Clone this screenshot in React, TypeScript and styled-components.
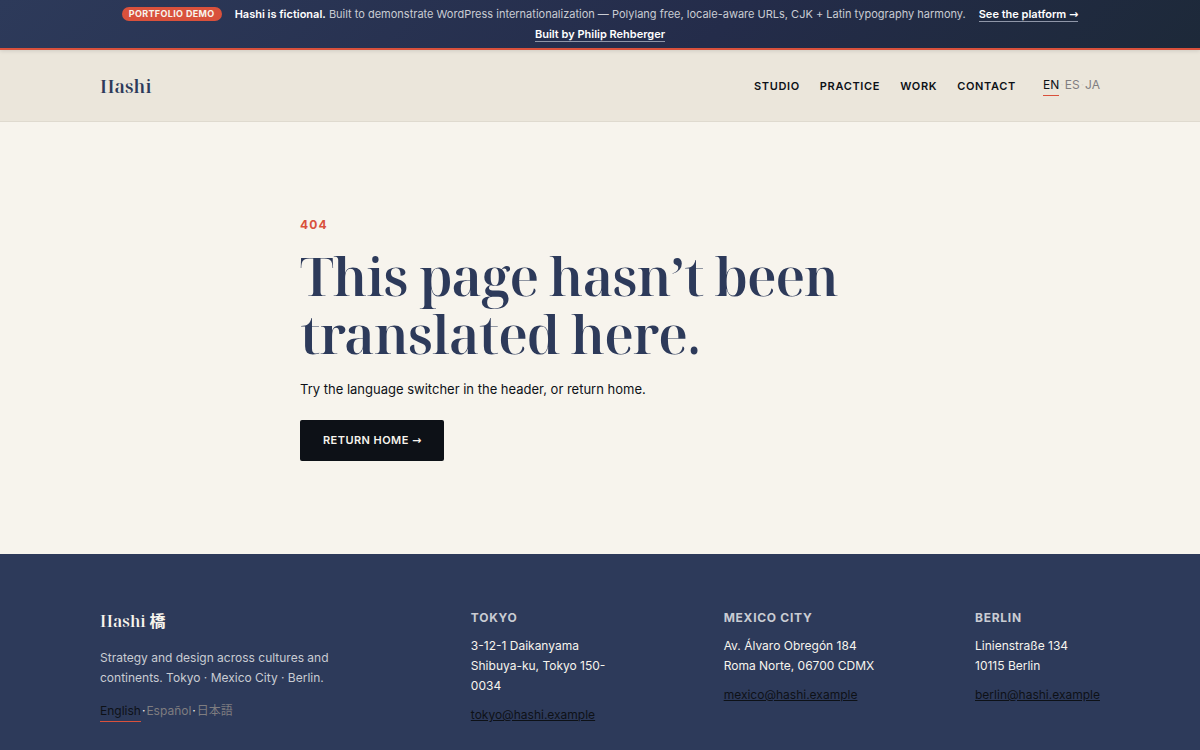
import React from 'react';
import styled, { createGlobalStyle } from 'styled-components';

const Global = createGlobalStyle`
  *, *::before, *::after { box-sizing: border-box; }
  body {
    margin: 0;
    background: #f7f4ed;
    color: #0d1117;
    font-family: Inter, "Noto Sans CJK JP", sans-serif;
    font-size: 13px;
    line-height: 26px;
    overflow-x: hidden;
  }
  h1, h2, p { margin: 0; }
`;

const serif = '"Noto Serif Display", "Liberation Serif", "Noto Sans CJK JP", serif';

const Banner = styled.aside`
  position: relative;
  display: flex;
  flex-wrap: wrap;
  align-items: center;
  justify-content: center;
  gap: 0 13px;
  padding: 4px 80px;
  border-bottom: 2px solid #d9513c;
  background: linear-gradient(135deg, #2d3a5a, #242c4a 60%, #1d2939);
  box-shadow: 0 1px 4px rgba(13, 17, 23, 0.12);
  color: #c9ccd3;
  font-size: 11px;
  line-height: 20px;
`;
const Badge = styled.span`
  padding: 0 7px;
  border-radius: 999px;
  background: #d9513c;
  color: #f7f4ed;
  font-size: 9px;
  font-weight: 700;
  line-height: 14px;
  letter-spacing: 0.04em;
  text-transform: uppercase;
`;
const Strong = styled.strong`
  color: #fff;
  font-weight: 600;
`;
const BannerLink = styled.a`
  margin: 3px 0 2px;
  border-bottom: 1px solid #8f96a8;
  color: #fff;
  font-weight: 600;
  line-height: 14px;
  text-decoration: none;
`;
const Arrow = styled.span`
  font-family: "DejaVu Sans", sans-serif;
  font-weight: 700;
  letter-spacing: normal;
  line-height: 1;
`;

const Header = styled.header`
  border-bottom: 1px solid #dfdacf;
  background: #ebe6db;
`;
const Container = styled.div`
  width: 100%;
  max-width: 1080px;
  margin: 0 auto;
  padding: 0 40px;
`;
const HeaderInner = styled(Container)`
  display: flex;
  align-items: center;
  justify-content: space-between;
  min-height: 71px;
`;
const Logo = styled.a`
  color: #2d3a5a;
  font-family: ${serif};
  font-size: 18px;
  font-weight: 600;
  text-decoration: none;
`;
const Nav = styled.nav`
  display: flex;
  align-items: center;
  gap: 20px;
`;
const NavLink = styled.a`
  color: #0d1117;
  font-size: 11px;
  font-weight: 600;
  letter-spacing: 0.06em;
  text-decoration: none;
  text-transform: uppercase;
`;
const Languages = styled.div`
  display: flex;
  gap: 1px;
  margin-left: 7px;
  font-size: 12px;
  line-height: 20px;
`;
const Language = styled.a<{ $active?: boolean }>`
  border-bottom: 1px solid ${p => (p.$active ? '#d9513c' : 'transparent')};
  color: ${p => (p.$active ? '#0d1117' : '#7f7d80')};
  text-decoration: none;
`;
const Dot = styled.span<{ $color: string }>`
  color: ${p => p.$color};
`;

const Main = styled.main`
  max-width: 600px;
  margin: 0 auto;
  padding: 90px 0 93px;
`;
const Code = styled.p`
  color: #d9513c;
  font-size: 12px;
  font-weight: 700;
  letter-spacing: 0.1em;
`;
const Title = styled.h1`
  margin: 9px 0 13px;
  color: #2d3a5a;
  font-family: ${serif};
  font-size: 53px;
  font-weight: 600;
  line-height: 58px;
  letter-spacing: -1px;
`;
const Button = styled.a`
  display: inline-block;
  margin-top: 18px;
  padding: 10px 23px;
  border-radius: 2px;
  background: #0d1117;
  color: #f7f4ed;
  font-size: 11px;
  font-weight: 600;
  line-height: 21px;
  letter-spacing: 0.04em;
  text-decoration: none;
  text-transform: uppercase;
`;

const Footer = styled.footer`
  padding: 54px 0 40px;
  background: #2d3a5a;
  color: #f7f4ed;
  font-size: 12px;
  line-height: 20px;
`;
const FooterInner = styled(Container)`
  display: flex;
  justify-content: space-between;
`;
const Brand = styled.div`
  width: 270px;
`;
const BrandName = styled.p`
  margin-bottom: 14px;
  font-family: ${serif};
  font-size: 16px;
  font-weight: 600;
  line-height: 26px;
`;
const Kanji = styled.span`
  font-family: "Noto Sans CJK JP", sans-serif;
  font-weight: 700;
  line-height: 1;
`;
const Tagline = styled.p`
  color: #c9ccd3;
`;
const Office = styled.address`
  max-width: 152px;
  font-style: normal;
`;
const City = styled.h2`
  margin-bottom: 9px;
  color: #c9ccd3;
  font-size: 12px;
  font-weight: 700;
  line-height: 19px;
  letter-spacing: 0.06em;
  text-transform: uppercase;
`;
const Mail = styled.a`
  display: block;
  margin-top: 9px;
  color: #0d1117;
`;
const FooterLanguages = styled(Languages)`
  margin: 13px 0 0;
`;

const offices = [
  { city: 'Tokyo', lines: ['3-12-1 Daikanyama', 'Shibuya-ku, Tokyo 150-0034'], mail: 'tokyo@hashi.example' },
  { city: 'Mexico City', lines: ['Av. Álvaro Obregón 184', 'Roma Norte, 06700 CDMX'], mail: 'mexico@hashi.example' },
  { city: 'Berlin', lines: ['Linienstraße 134', '10115 Berlin'], mail: 'berlin@hashi.example' },
];

export default function App() {
  return (
    <>
      <Global />
      <Banner>
        <Badge>Portfolio demo</Badge>
        <span><Strong>Hashi is fictional.</Strong> Built to demonstrate WordPress internationalization — Polylang free, locale-aware URLs, CJK + Latin typography harmony.</span>
        <BannerLink href="#platform">See the platform <Arrow>→</Arrow></BannerLink>
        <BannerLink href="#author">Built by Philip Rehberger</BannerLink>
      </Banner>
      <Header>
        <HeaderInner>
          <Logo href="#home">Hashi</Logo>
          <Nav>
            {['Studio', 'Practice', 'Work', 'Contact'].map(n => <NavLink key={n} href={`#${n}`}>{n}</NavLink>)}
            <Languages>
              <Language href="#en" $active>EN</Language>
              <Dot $color="#dcd7cd">·</Dot>
              <Language href="#es">ES</Language>
              <Dot $color="#dcd7cd">·</Dot>
              <Language href="#ja">JA</Language>
            </Languages>
          </Nav>
        </HeaderInner>
      </Header>
      <Main>
        <Code>404</Code>
        <Title>This page hasn’t been translated here.</Title>
        <p>Try the language switcher in the header, or return home.</p>
        <Button href="#home">Return home <Arrow>→</Arrow></Button>
      </Main>
      <Footer>
        <FooterInner>
          <Brand>
            <BrandName>Hashi <Kanji>橋</Kanji></BrandName>
            <Tagline>Strategy and design across cultures and continents. Tokyo · Mexico City · Berlin.</Tagline>
            <FooterLanguages>
              <Language href="#en" $active>English</Language>
              <Dot $color="#f7f4ed">·</Dot>
              <Language href="#es">Español</Language>
              <Dot $color="#f7f4ed">·</Dot>
              <Language href="#ja">日本語</Language>
            </FooterLanguages>
          </Brand>
          {offices.map(o => (
            <Office key={o.city}>
              <City>{o.city}</City>
              {o.lines.map(l => <div key={l}>{l}</div>)}
              <Mail href={`mailto:${o.mail}`}>{o.mail}</Mail>
            </Office>
          ))}
        </FooterInner>
      </Footer>
    </>
  );
}
